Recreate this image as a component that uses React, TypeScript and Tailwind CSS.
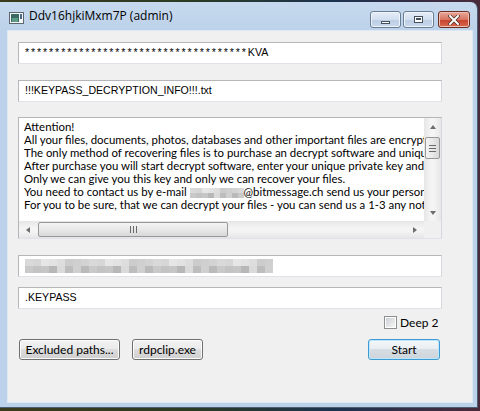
const blurTop = [
  "bg-[#d6d6d6]", "bg-[#cfcfcf]", "bg-[#e2e2e2]", "bg-[#d9d9d9]", "bg-[#cccccc]", "bg-[#e6e6e6]", "bg-[#d3d3d3]", "bg-[#dddddd]",
];
const blurBottom = [
  "bg-[#bdbdbd]", "bg-[#c9c9c9]", "bg-[#b7b7b7]", "bg-[#d0d0d0]", "bg-[#c3c3c3]", "bg-[#dadada]", "bg-[#bababa]", "bg-[#c6c6c6]",
];

const sans = "font-['Open_Sans','Noto_Sans',sans-serif]";
const ui = "font-['Lato','Open_Sans',sans-serif]";
const msSans = "font-['Liberation_Sans',Arial,sans-serif]";

function Pixels({ cols, size }: { cols: number; size: number }) {
  const cells = Array.from({ length: cols });
  return (
    <span className="inline-flex flex-col align-middle">
      <span className="flex">
        {cells.map((_, i) => (
          <span key={i} className={blurTop[(i * 5 + 3) % 8]} style={{ width: size, height: size - 1 }} />
        ))}
      </span>
      <span className="flex">
        {cells.map((_, i) => (
          <span key={i} className={blurBottom[(i * 3 + 1) % 8]} style={{ width: size, height: size - 1 }} />
        ))}
      </span>
    </span>
  );
}

function TextBox({ children, className = "" }: { children?: React.ReactNode; className?: string }) {
  return (
    <div
      className={`flex h-[22px] w-[424px] items-center overflow-hidden whitespace-nowrap border border-[#b4b6ba] border-b-[#dfe3e8] border-r-[#d5d9de] bg-white pl-[6px] text-[10.6px] text-black ${msSans} ${className}`}
    >
      {children}
    </div>
  );
}

function Arrow({ dir }: { dir: "up" | "down" | "left" | "right" }) {
  const pts = {
    up: "1,5 4,1 7,5",
    down: "1,1 4,5 7,1",
    left: "5,1 1,4 5,7",
    right: "1,1 5,4 1,7",
  }[dir];
  const vert = dir === "up" || dir === "down";
  return (
    <svg width={vert ? 8 : 6} height={vert ? 6 : 8} viewBox={vert ? "0 0 8 6" : "0 0 6 8"}>
      <polygon points={pts} fill="#6d6d6d" />
    </svg>
  );
}

function WinButton({ label, className = "", focused = false }: { label: string; className?: string; focused?: boolean }) {
  return (
    <button
      className={`flex h-[21px] items-center justify-center rounded-[3px] border text-[12px] text-black ${ui} ${
        focused
          ? "border-[#3c9ad4] bg-[linear-gradient(#f4f8fb_0%,#e9eef2_45%,#d6dde3_50%,#cdd5dc_100%)] shadow-[inset_0_0_0_1px_#bfe6fb]"
          : "border-[#707070] bg-[linear-gradient(#f2f2f2_0%,#ebebeb_45%,#dddddd_50%,#cfcfcf_100%)] shadow-[inset_0_0_0_1px_#fcfcfc]"
      } ${className}`}
    >
      {label}
    </button>
  );
}

const lines = [
  "Attention!",
  "All your files, documents, photos, databases and other important files are encrypted",
  "The only method of recovering files is to purchase an decrypt software and unique key for you.",
  "After purchase you will start decrypt software, enter your unique private key and it will decrypt all your data.",
  "Only we can give you this key and only we can recover your files.",
];

export default function App() {
  return (
    <div className="flex h-[411px] w-[480px] flex-col overflow-hidden bg-[linear-gradient(90deg,#3b3a1c,#2a3b22_40%,#1c3350_70%,#4a2a3a)]">
      {/* window */}
      <div className="mt-[2px] flex h-[406px] w-[478px] flex-col rounded-tr-[7px] border-r border-b border-[#4d5f75] bg-[linear-gradient(#c6d9ee,#bcd2ea_30px,#bcd2ea)]">
        {/* title bar */}
        <div className="flex h-[29px] items-start">
          <svg className="ml-[9px] mt-[10px]" width="15" height="12" viewBox="0 0 15 12">
            <rect x="0.5" y="0.5" width="14" height="11" fill="#f4f6f8" stroke="#5d6670" />
            <rect x="2" y="2" width="8" height="8" fill="#3a6a62" />
            <rect x="3" y="6" width="6" height="4" fill="#5c9b88" />
            <rect x="11" y="2" width="2" height="5" fill="#4a6a8a" />
          </svg>
          <span className={`ml-[5px] mt-[6px] text-[12px] leading-[16px] text-black ${sans}`}>Ddv16hjkiMxm7P (admin)</span>
          <div className="ml-auto mr-[7px] mt-[9px] flex gap-[2px]">
            <div className="flex h-[17px] w-[31px] items-center justify-center rounded-[3px] border border-[#6b7d93] bg-[linear-gradient(#e6eef8,#d2dff0_50%,#bccde4_51%,#c9d8ec)] shadow-[inset_0_0_0_1px_#eef4fb]">
              <div className="mt-[5px] h-[3px] w-[9px] border border-[#44505e] bg-white" />
            </div>
            <div className="flex h-[17px] w-[31px] items-center justify-center rounded-[3px] border border-[#6b7d93] bg-[linear-gradient(#e6eef8,#d2dff0_50%,#bccde4_51%,#c9d8ec)] shadow-[inset_0_0_0_1px_#eef4fb]">
              <div className="h-[7px] w-[9px] border border-[#44505e] bg-white">
                <div className="m-[1px] h-[2px] border border-[#44505e]" />
              </div>
            </div>
            <div className="ml-[2px] flex h-[17px] w-[32px] items-center justify-center rounded-[3px] border border-[#6b2c22] bg-[linear-gradient(#e8a898,#d87462_50%,#c8412c_51%,#d66a50)] shadow-[inset_0_0_0_1px_#eec0b4]">
              <svg width="12" height="10" viewBox="0 0 12 10">
                <path d="M2 1 L10 9 M10 1 L2 9" stroke="#4a2a22" strokeWidth="3.4" strokeLinecap="square" />
                <path d="M2 1 L10 9 M10 1 L2 9" stroke="#ffffff" strokeWidth="2" strokeLinecap="square" />
              </svg>
            </div>
          </div>
        </div>

        {/* client */}
        <div className="ml-[8px] flex h-[371px] w-[464px] flex-col bg-[#f0f0f0] pl-[10px] pt-[11px] shadow-[0_0_0_1px_#dde8f4]">
          <TextBox>
            <span className="tracking-[1.9px]">{"*".repeat(37)}</span>KVA
          </TextBox>
          <TextBox className="mt-[16px]">!!!KEYPASS_DECRYPTION_INFO!!!.txt</TextBox>

          {/* textarea */}
          <div className="mt-[15px] grid h-[122px] w-[424px] grid-cols-[405px_17px] grid-rows-[103px_17px] border border-[#b4b6ba] border-b-[#dfe3e8] border-r-[#d5d9de] bg-white">
            <div className={`overflow-hidden whitespace-nowrap pl-[5px] pt-[2px] text-[11.4px] leading-[13px] text-black ${ui}`}>
              {lines.map((l) => (
                <div key={l}>{l}</div>
              ))}
              <div>
                You need to contact us by e-mail <Pixels cols={9} size={6} />
                @bitmessage.ch send us your personal ID key
              </div>
              <div>For you to be sure, that we can decrypt your files - you can send us a 1-3 any not very big encrypted files</div>
            </div>
            {/* vertical scrollbar */}
            <div className="flex flex-col items-center bg-[linear-gradient(90deg,#e6e6e6,#f4f4f4_40%,#f4f4f4_60%,#e6e6e6)]">
              <div className="flex h-[17px] items-center justify-center">
                <Arrow dir="up" />
              </div>
              <div className="mt-[2px] flex h-[22px] w-[15px] flex-col items-center justify-center gap-[2px] rounded-[2px] border border-[#979797] bg-[linear-gradient(90deg,#f4f4f4,#e8e8e8_50%,#d8d8d8)]">
                <div className="h-px w-[7px] bg-[#6a6a6a]" />
                <div className="h-px w-[7px] bg-[#6a6a6a]" />
                <div className="h-px w-[7px] bg-[#6a6a6a]" />
              </div>
              <div className="mt-auto flex h-[17px] items-center justify-center">
                <Arrow dir="down" />
              </div>
            </div>
            {/* horizontal scrollbar */}
            <div className="flex items-center bg-[linear-gradient(#e6e6e6,#f4f4f4_40%,#f4f4f4_60%,#e6e6e6)]">
              <div className="flex w-[17px] items-center justify-center">
                <Arrow dir="left" />
              </div>
              <div className="ml-[2px] flex h-[15px] w-[190px] items-center justify-center gap-[2px] rounded-[2px] border border-[#979797] bg-[linear-gradient(#f4f4f4,#e8e8e8_50%,#d8d8d8)]">
                <div className="h-[7px] w-px bg-[#6a6a6a]" />
                <div className="h-[7px] w-px bg-[#6a6a6a]" />
                <div className="h-[7px] w-px bg-[#6a6a6a]" />
              </div>
              <div className="ml-auto mr-[6px] flex w-[6px] items-center justify-center">
                <Arrow dir="right" />
              </div>
            </div>
            <div className="bg-[#f0f0f0]" />
          </div>

          <TextBox className="mt-[16px]">
            <Pixels cols={31} size={8} />
          </TextBox>
          <TextBox className="mt-[10px]">.KEYPASS</TextBox>

          {/* checkbox row */}
          <div className="mt-[7px] flex h-[13px] items-center pl-[366px]">
            <div className="flex h-[13px] w-[13px] items-center justify-center border border-[#8e8f8f] bg-white">
              <div className="h-[9px] w-[9px] bg-[linear-gradient(135deg,#cbcfd5,#f6f6f6)]" />
            </div>
            <span className={`ml-[3px] text-[12px] leading-[13px] text-black ${ui}`}>Deep 2</span>
          </div>

          {/* buttons */}
          <div className="mt-[10px] flex pl-[1px]">
            <WinButton label="Excluded paths..." className="w-[101px]" />
            <WinButton label="rdpclip.exe" className="ml-[12px] w-[71px]" />
            <WinButton label="Start" focused className="ml-[165px] w-[72px]" />
          </div>
        </div>
      </div>
    </div>
  );
}
